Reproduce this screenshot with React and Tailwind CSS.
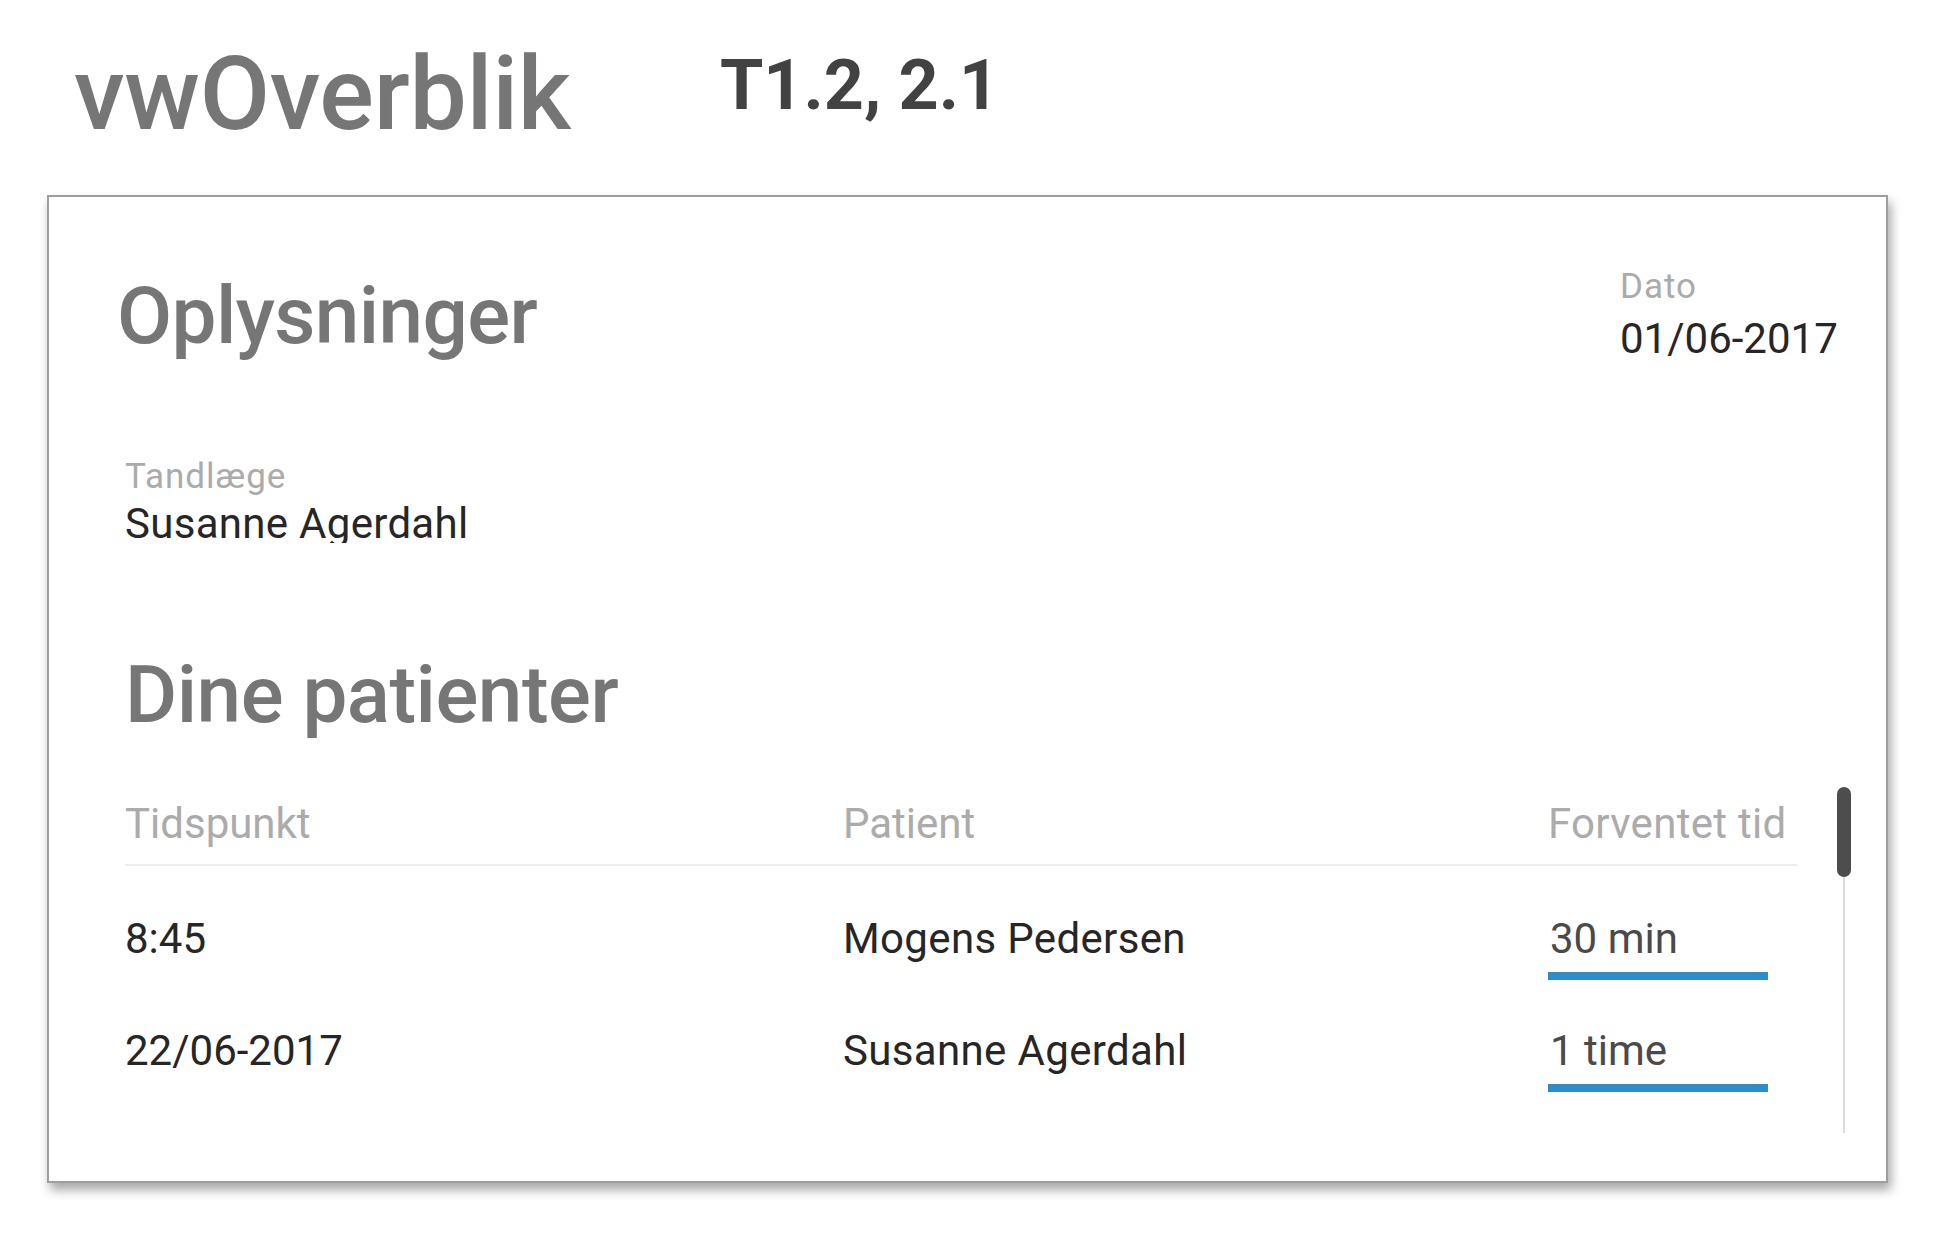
import React from "react";

const patients = [
  { time: "8:45", name: "Mogens Pedersen", duration: "30 min" },
  { time: "22/06-2017", name: "Susanne Agerdahl", duration: "1 time" },
];

const DurationField = ({ value }) => (
  <div className="w-[220px] pt-[3px] pb-[12px] pl-[2px] border-b-[8px] border-[#2a8dc7] text-[42px] leading-none text-[#4a4a4a]">
    {value}
  </div>
);

const App = () => {
  return (
    <div className="min-h-screen bg-white font-[Roboto,sans-serif]">
      <header className="h-[195px] flex items-start pl-[74px] pt-[43px]">
        <div className="w-[646px] text-[102px] leading-none font-medium tracking-[-0.3px] text-[#767676]">
          vwOverblik
        </div>
        <div className="mt-[7px] text-[70px] leading-none font-bold text-[#424242]">
          T1.2, 2.1
        </div>
      </header>

      <div className="ml-[47px] w-[1841px] h-[988px] border-2 border-[#9e9e9e] bg-white shadow-[3px_7px_10px_rgba(0,0,0,0.35)]">
        <div className="flex pt-[72px]">
          <h1 className="ml-[68px] mt-[7px] text-[80px] leading-none font-medium tracking-[-0.6px] text-[#767676]">
            Oplysninger
          </h1>
          <div className="ml-auto w-[266px]">
            <div className="text-[35px] leading-none tracking-[1px] text-[#ababab]">Dato</div>
            <div className="mt-[14px] text-[42px] leading-none text-[#262626]">
              01/06-2017
            </div>
          </div>
        </div>

        <div className="pl-[76px]">
          <div className="mt-[99px] text-[35px] leading-none tracking-[1px] text-[#ababab]">
            Tandlæge
          </div>
          <div className="mt-[9px] h-[40px] overflow-hidden text-[42px] leading-none tracking-[0.3px] text-[#262626]">
            Susanne Agerdahl
          </div>

          <h2 className="mt-[112px] text-[80px] leading-none font-medium tracking-[-0.5px] text-[#767676]">
            Dine patienter
          </h2>

          <div className="mt-[52px] flex items-start">
            <div className="w-[1672px] pt-[16px]">
              <div className="grid grid-cols-[718px_705px_1fr] pb-[19px] border-b-2 border-[#eeeeee] text-[42px] leading-none text-[#ababab]">
                <div>Tidspunkt</div>
                <div>Patient</div>
                <div className="tracking-[0.3px]">Forventet tid</div>
              </div>
              {patients.map((p) => (
                <div
                  key={p.time}
                  className="grid grid-cols-[718px_705px_1fr] h-[112px] pt-[52px] text-[42px] leading-none text-[#262626]"
                >
                  <div>{p.time}</div>
                  <div className="tracking-[0.35px]">{p.name}</div>
                  <div className="-mt-[3px]">
                    <DurationField value={p.duration} />
                  </div>
                </div>
              ))}
            </div>
            <div className="ml-[40px] w-[14px] flex flex-col items-center">
              <div className="w-[14px] h-[90px] rounded-full bg-[#4d4d4d]" />
              <div className="w-[2px] h-[256px] bg-[#dddddd]" />
            </div>
          </div>
        </div>
      </div>
    </div>
  );
};

export default App;
